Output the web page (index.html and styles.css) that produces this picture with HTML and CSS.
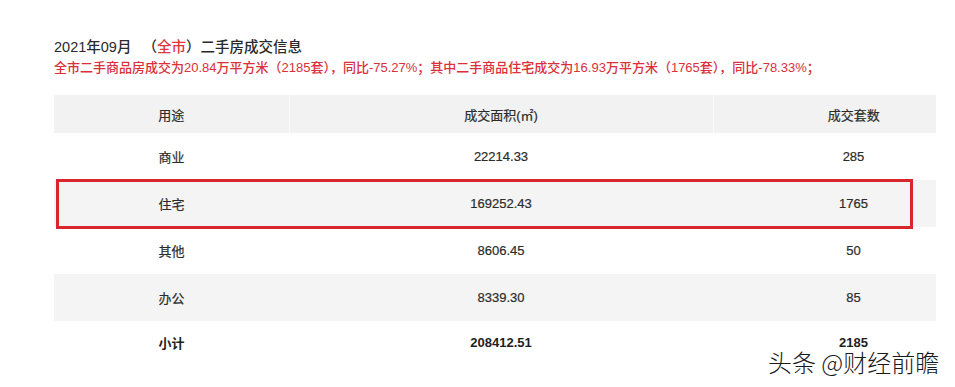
FILE: index.html
```html
<!DOCTYPE html>
<html lang="zh-CN">
<head>
<meta charset="utf-8">
<title>2021年09月（全市）二手房成交信息</title>
<link rel="stylesheet" href="styles.css">
</head>
<body>
<div class="page">
  <h1 class="title">2021年09月<span class="gap"></span>（<span class="red">全市</span>）二手房成交信息</h1>
  <p class="summary">全市二手商品房成交为20.84万平方米（2185套），同比-75.27%；其中二手商品住宅成交为16.93万平方米（1765套），同比-78.33%；</p>
  <div class="table-wrap">
    <table class="data">
      <colgroup>
        <col class="c1"><col class="c2"><col class="c3">
      </colgroup>
      <thead>
        <tr><th>用途</th><th>成交面积(㎡)</th><th class="num3">成交套数</th></tr>
      </thead>
      <tbody>
        <tr><td>商业</td><td>22214.33</td><td class="num3">285</td></tr>
        <tr class="alt"><td>住宅</td><td>169252.43</td><td class="num3">1765</td></tr>
        <tr><td>其他</td><td>8606.45</td><td class="num3">50</td></tr>
        <tr class="alt"><td>办公</td><td>8339.30</td><td class="num3">85</td></tr>
        <tr class="total"><td>小计</td><td>208412.51</td><td class="num3">2185</td></tr>
      </tbody>
    </table>
    <div class="highlight"></div>
  </div>
  <div class="watermark">头条 @财经前瞻</div>
</div>
</body>
</html>
```
FILE: styles.css
```css
html, body {
  margin: 0;
  padding: 0;
  background: #ffffff;
}
body {
  font-family: "Liberation Sans", "Noto Sans CJK SC", sans-serif;
  color: #333333;
}
.page {
  position: relative;
  width: 955px;
  height: 387px;
  padding: 38px 0 0 54px;
  box-sizing: border-box;
  overflow: hidden;
}
.title {
  margin: 0;
  font-size: 14.5px;
  line-height: 18px;
  font-weight: 500;
  color: #2a2a2a;
}
.gap {
  display: inline-block;
  width: 11px;
}
.red {
  color: #e0363c;
}
.summary {
  margin: 5px 0 0 0;
  font-size: 13px;
  line-height: 14px;
  font-weight: 500;
  color: #d9303a;
  white-space: nowrap;
}
.table-wrap {
  position: relative;
  margin-top: 20px;
  width: 882px;
}
.data {
  width: 882px;
  border-collapse: collapse;
  table-layout: fixed;
  font-size: 13px;
}
.c1 { width: 235px; }
.c2 { width: 424px; }
.c3 { width: 223px; }
.data th, .data td {
  text-align: center;
  padding: 0;
  color: #2b2b2b;
  font-weight: 400;
  -webkit-text-stroke: 0.2px #2b2b2b;
}
.data th {
  height: 38px;
  background: #f2f2f2;
  border-left: 1px solid #fafafa;
}
.data th:first-child {
  border-left: none;
}
.data td {
  height: 47px;
}
.data .num3 {
  padding-left: 58px;
}
.data tr.alt td {
  background: #f4f4f4;
}
.data tr.total td {
  height: 42px;
  font-weight: bold;
  color: #1e1e1e;
  -webkit-text-stroke: 0;
}
.highlight {
  position: absolute;
  left: 2px;
  top: 84px;
  width: 857px;
  height: 50px;
  box-sizing: border-box;
  border: 3px solid #d8262c;
}
.watermark {
  position: absolute;
  left: 768px;
  top: 350px;
  font-family: "Noto Sans CJK SC", sans-serif;
  font-size: 24px;
  line-height: 24px;
  font-weight: 300;
  color: #1a1a1a;
  white-space: nowrap;
  text-shadow: 0 0 2px #ffffff, 0 0 2px #ffffff;
}
```
